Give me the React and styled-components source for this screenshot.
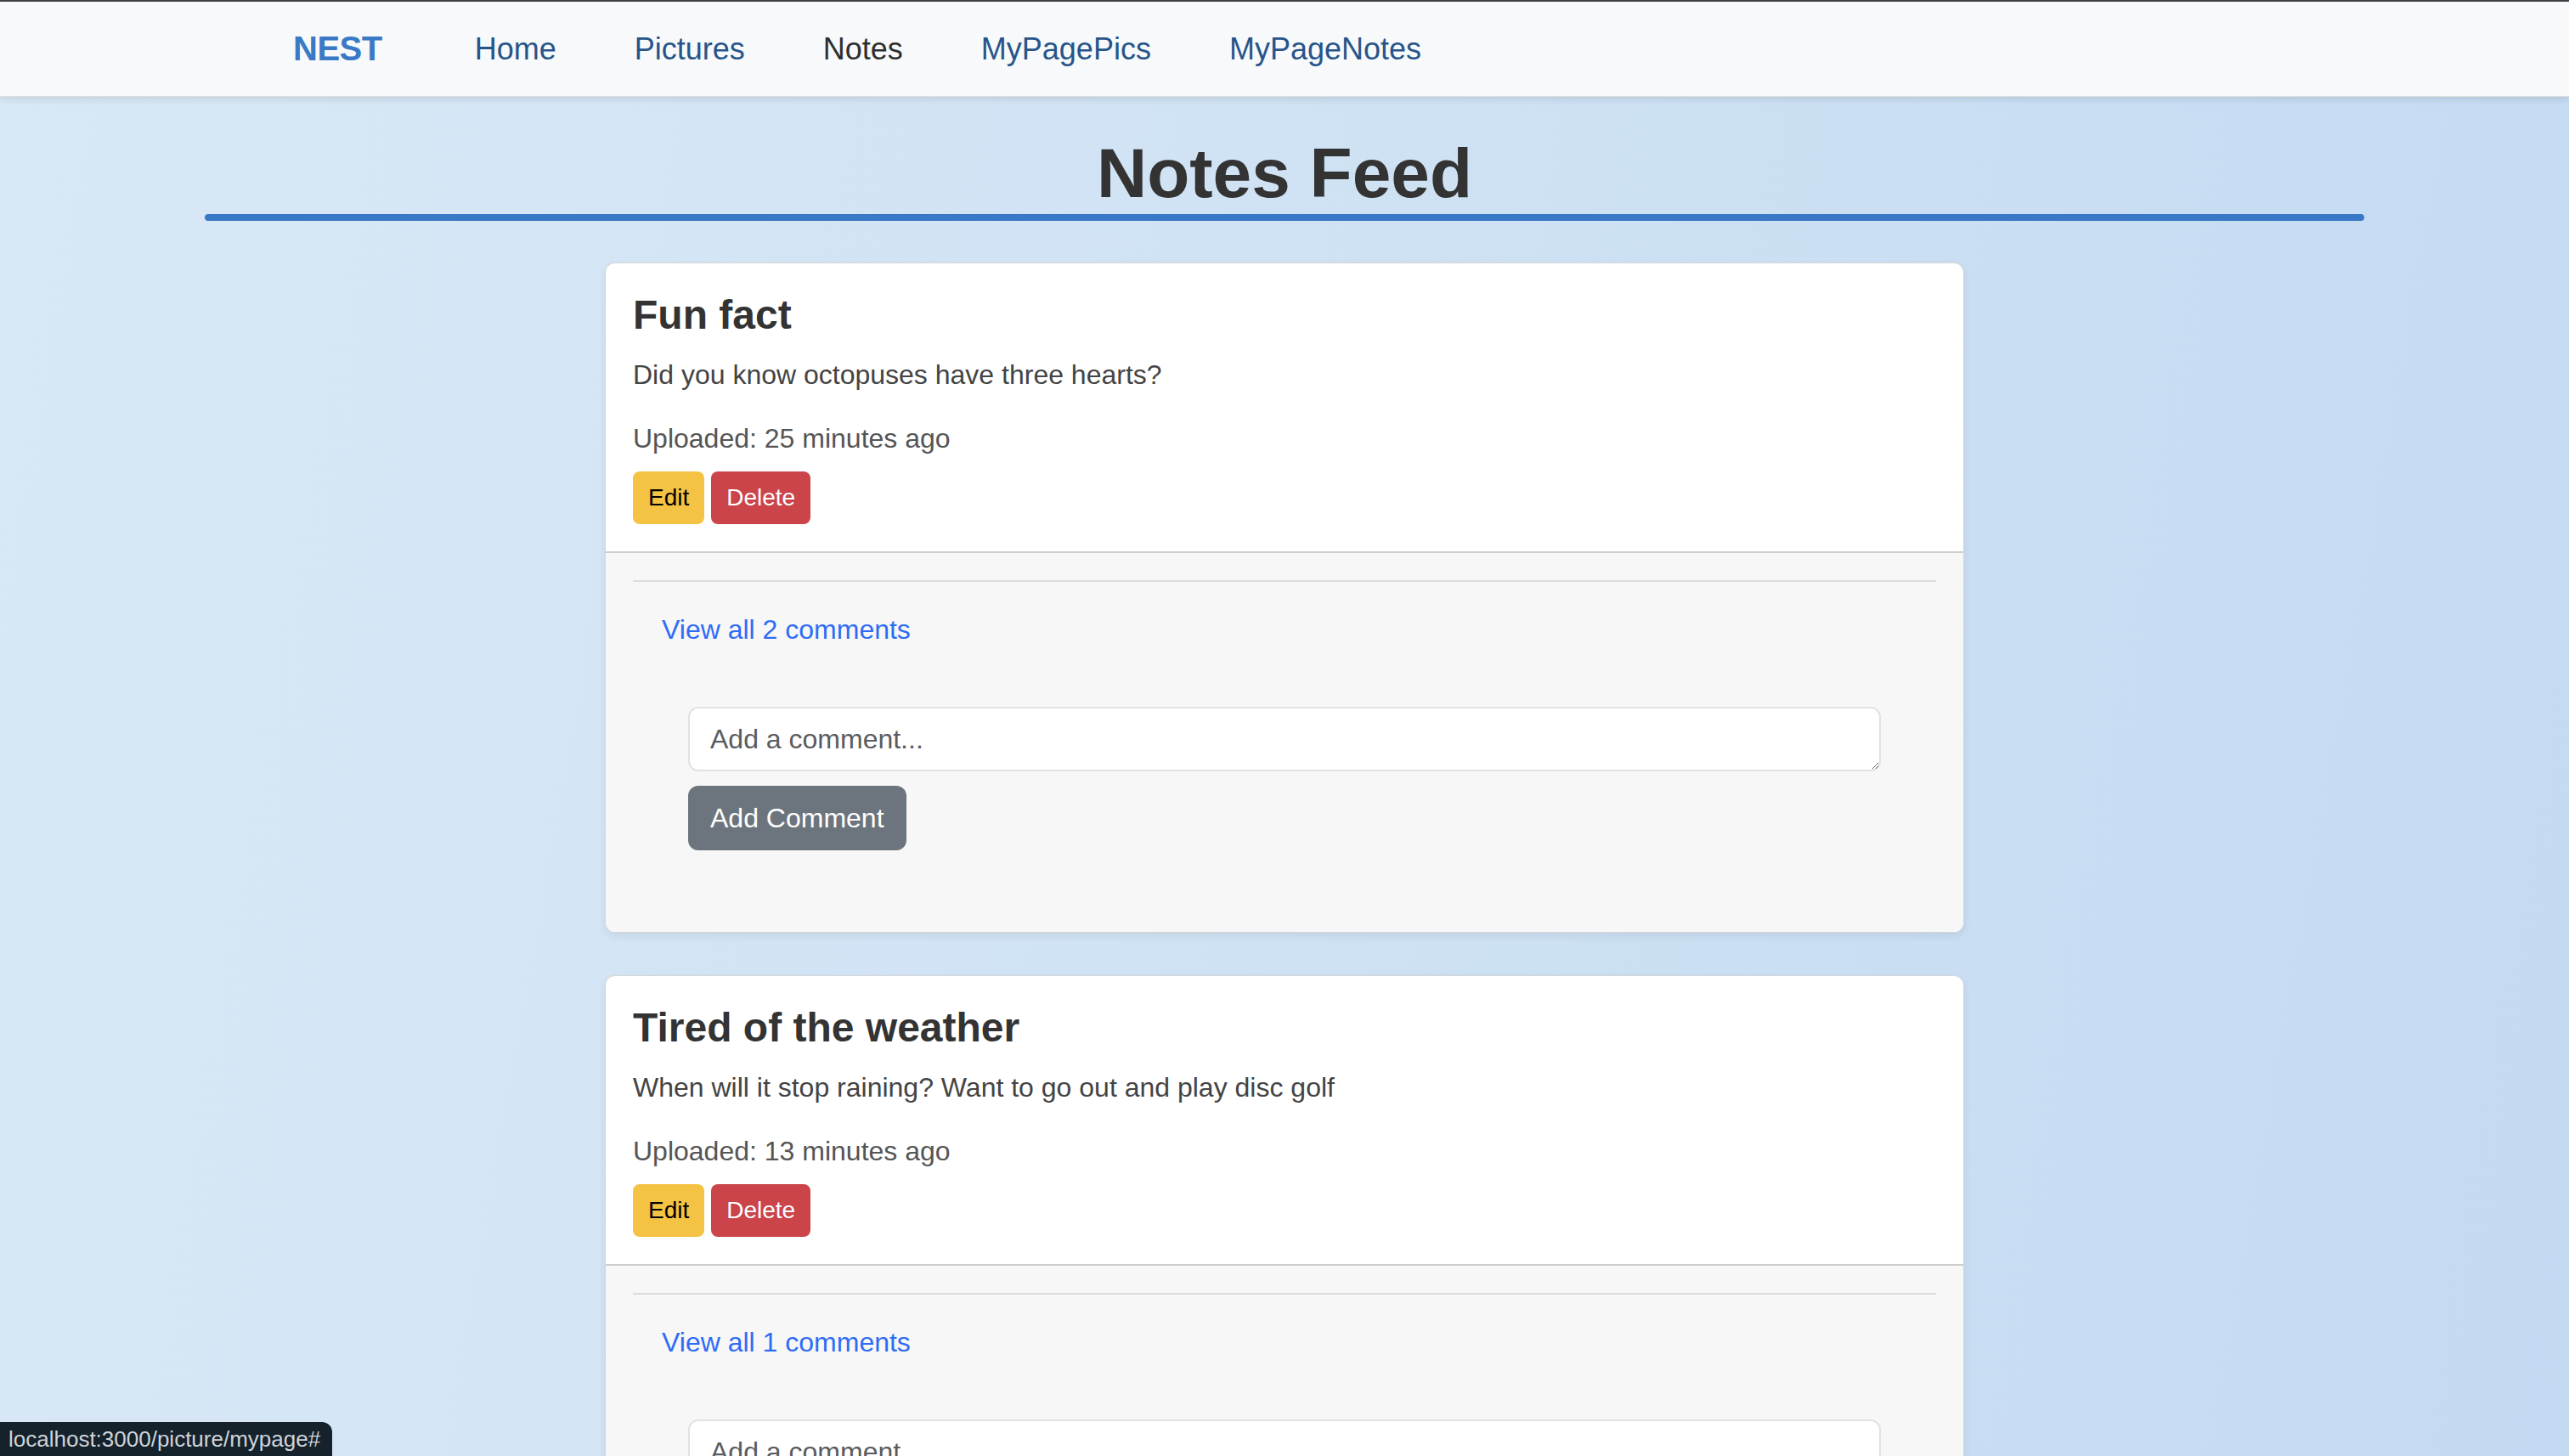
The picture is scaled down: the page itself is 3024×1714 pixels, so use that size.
import React from "react";
import styled, { createGlobalStyle } from "styled-components";

const GlobalStyle = createGlobalStyle`
  html, body {
    margin: 0;
    padding: 0;
  }
  body {
    font-family: "Liberation Sans", Arial, Helvetica, sans-serif;
    background: linear-gradient(100deg, #d9e8f6 0%, #cfe2f4 50%, #c3daf2 100%);
    background-attachment: fixed;
    min-height: 100vh;
    color: #333;
  }
  * { box-sizing: border-box; }
`;

const Navbar = styled.nav`
  height: 114px;
  background: #f8f9fa;
  border-top: 2px solid #3f4246;
  border-bottom: 1px solid #dedede;
  box-shadow: 0 3px 8px rgba(0, 0, 0, 0.1);
  display: flex;
  align-items: center;
  padding-left: 345px;
  position: relative;
  z-index: 2;
`;

const Brand = styled.a`
  font-size: 40px;
  font-weight: 700;
  color: #3a79c6;
  text-decoration: none;
  margin-right: 109px;
  letter-spacing: -0.5px;
`;

const NavLinks = styled.div`
  display: flex;
  align-items: center;
  gap: 92px;
`;

const NavLink = styled.a`
  font-size: 36px;
  color: ${(p) => (p.$active ? "#2f2f2f" : "#27558a")};
  text-decoration: none;
`;

const Main = styled.main`
  padding-top: 42px;
`;

const TitleBlock = styled.div`
  width: 2542px;
  margin: 0 auto 49px;
`;

const Title = styled.h1`
  margin: 0;
  font-size: 82px;
  line-height: 96px;
  font-weight: 700;
  text-align: center;
  color: #333;
  &::after {
    content: "";
    display: block;
    height: 8px;
    border-radius: 4px;
    background: #3878c6;
  }
`;

const Card = styled.article`
  width: 1600px;
  margin: 0 auto 50px;
  background: #fff;
  border: 1px solid #d6d6d6;
  border-radius: 12px;
  box-shadow: 0 4px 10px rgba(0, 0, 0, 0.07);
  overflow: hidden;
`;

const CardBody = styled.div`
  padding: 32px 32px 32px;
  border-bottom: 2px solid #cdcdcd;
`;

const CardTitle = styled.h4`
  margin: 0 0 17px;
  font-size: 48px;
  line-height: 58px;
  font-weight: 700;
  color: #333;
`;

const Text = styled.p`
  margin: 0 0 ${(p) => p.$mb || 0}px;
  font-size: 32px;
  line-height: 48px;
  color: ${(p) => p.$color || "#444"};
`;

const ButtonRow = styled.div`
  display: flex;
  gap: 8px;
`;

const SmallButton = styled.button`
  font-family: inherit;
  font-size: 28px;
  line-height: 42px;
  padding: 8px 16px;
  border: 2px solid transparent;
  border-radius: 8px;
  background: ${(p) => (p.$variant === "danger" ? "#cb444a" : "#f5c343")};
  color: ${(p) => (p.$variant === "danger" ? "#fff" : "#000")};
  cursor: pointer;
`;

const CardFooter = styled.div`
  background: #f7f7f7;
  padding: 32px 32px 32px;
`;

const Rule = styled.hr`
  margin: 0 0 32px;
  border: 0;
  height: 2px;
  background: #dcdcdc;
`;

const ViewLink = styled.a`
  display: block;
  padding-left: 34px;
  font-size: 32px;
  line-height: 48px;
  color: #2f6cf5;
  text-decoration: none;
  margin-bottom: 67px;
`;

const CommentForm = styled.form`
  padding: 0 65px 64px;
  display: flex;
  flex-direction: column;
  align-items: flex-start;
`;

const CommentInput = styled.textarea`
  width: 100%;
  height: 76px;
  font-family: inherit;
  font-size: 32px;
  line-height: 48px;
  padding: 12px 24px;
  border: 2px solid #dfe2e6;
  border-radius: 12px;
  background: #fff;
  color: #333;
  display: block;
  &::placeholder {
    color: #595c60;
  }
`;

const AddButton = styled.button`
  margin-top: 17px;
  font-family: inherit;
  font-size: 32px;
  line-height: 48px;
  padding: 12px 24px;
  border: 2px solid transparent;
  border-radius: 12px;
  background: #6c757d;
  color: #fff;
  cursor: pointer;
`;

const StatusBubble = styled.div`
  position: fixed;
  left: 0;
  bottom: 0;
  height: 40px;
  padding: 0 14px 0 10px;
  display: flex;
  align-items: center;
  background: #15222c;
  color: #cfd4d9;
  font-size: 26px;
  border-top-right-radius: 12px;
  z-index: 10;
`;

const notes = [
  {
    id: 1,
    title: "Fun fact",
    body: "Did you know octopuses have three hearts?",
    uploaded: "25 minutes ago",
    comments: 2,
  },
  {
    id: 2,
    title: "Tired of the weather",
    body: "When will it stop raining? Want to go out and play disc golf",
    uploaded: "13 minutes ago",
    comments: 1,
  },
];

function NoteCard({ note }) {
  return (
    <Card>
      <CardBody>
        <CardTitle>{note.title}</CardTitle>
        <Text $mb={27}>{note.body}</Text>
        <Text $mb={15} $color="#555">
          Uploaded: {note.uploaded}
        </Text>
        <ButtonRow>
          <SmallButton type="button">Edit</SmallButton>
          <SmallButton type="button" $variant="danger">
            Delete
          </SmallButton>
        </ButtonRow>
      </CardBody>
      <CardFooter>
        <Rule />
        <ViewLink href="#">View all {note.comments} comments</ViewLink>
        <CommentForm onSubmit={(e) => e.preventDefault()}>
          <CommentInput rows={1} placeholder="Add a comment..." />
          <AddButton type="submit">Add Comment</AddButton>
        </CommentForm>
      </CardFooter>
    </Card>
  );
}

export default function App() {
  return (
    <>
      <GlobalStyle />
      <Navbar>
        <Brand href="#">NEST</Brand>
        <NavLinks>
          <NavLink href="#">Home</NavLink>
          <NavLink href="#">Pictures</NavLink>
          <NavLink href="#" $active>
            Notes
          </NavLink>
          <NavLink href="#">MyPagePics</NavLink>
          <NavLink href="#">MyPageNotes</NavLink>
        </NavLinks>
      </Navbar>
      <Main>
        <TitleBlock>
          <Title>Notes Feed</Title>
        </TitleBlock>
        {notes.map((n) => (
          <NoteCard key={n.id} note={n} />
        ))}
      </Main>
      <StatusBubble>localhost:3000/picture/mypage#</StatusBubble>
    </>
  );
}
